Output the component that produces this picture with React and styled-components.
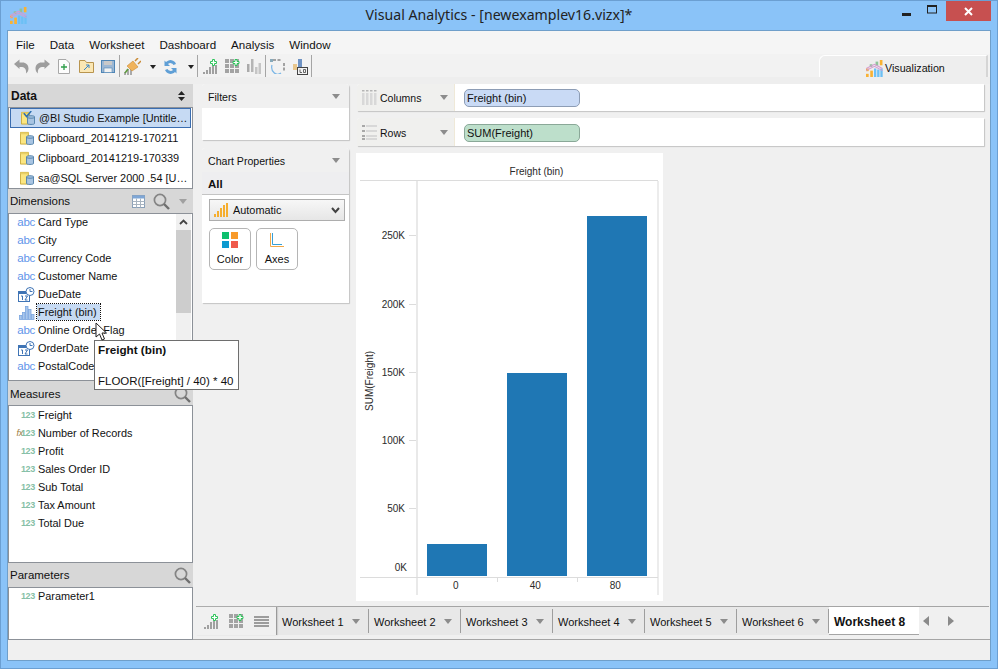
import React from 'react';
import styled, { createGlobalStyle } from 'styled-components';

const FONT = '"Liberation Sans", Arial, sans-serif';

const Global = createGlobalStyle`
  html, body { margin: 0; padding: 0; background: #8ac3f8; }
  body { font-family: ${FONT}; font-size: 11px; color: #111; }
  * { box-sizing: border-box; }
`;

const Frame = styled.div`
  position: relative; width: 998px; height: 669px; overflow: hidden;
  display: flex; flex-direction: column;
  background: #8ac3f8; border: 1px solid #6b9fd2;
`;
const TitleBar = styled.div`
  height: 29px; flex: none; position: relative;
  display: flex; align-items: center; justify-content: center;
  font-size: 14.15px; color: #222; padding-bottom: 2px; font-family: "Noto Sans", sans-serif;
`;
const AppLogo = styled.div`position: absolute; left: 9px; top: 6px; line-height: 0;`;
const WinControls = styled.div`
  position: absolute; right: 6px; top: 0; display: flex; align-items: flex-start;
`;
const WinBtn = styled.div`
  width: ${p => p.$w}px; height: 20px; line-height: 0;
  display: flex; align-items: center; justify-content: center;
  background: ${p => p.$close ? '#c75050' : 'transparent'};
`;
const Client = styled.div`
  flex: 1; margin: 0 6px 7px 6px; min-height: 0;
  display: flex; flex-direction: column;
  background: #f0f0f0; border: 1px solid #6f9fca;
`;
const MenuBar = styled.div`
  height: 23px; flex: none; display: flex; align-items: center; gap: 15px;
  padding: 3px 0 0 8px; background: #f5f5f5; font-size: 11.6px; color: #111;
`;
const ToolBar = styled.div`
  height: 30px; flex: none; display: flex; align-items: center;
  background: #f2f2f2; padding: 0 2px 7px 5px; position: relative;
  box-shadow: inset 0 -7px 0 #eeeeee;
`;
const ToolIcon = styled.span`
  display: inline-flex; line-height: 0; margin-left: ${p => p.$ml || 0}px; margin-top: 2px;
`;
const ToolSep = styled.span`
  width: 1px; height: 22px; background: #a5a5a5; margin: 0 ${p => p.$r ?? 4}px 0 ${p => p.$l ?? 4}px; flex: none;
`;
const VisTab = styled.div`
  margin-left: auto; width: 169px; height: 22px; align-self: flex-end;
  display: flex; align-items: center; gap: 2px; padding: 3px 0 0 46px;
  border: 1px solid #fff; border-bottom: none; border-right: 2px solid #d5d5d5; border-radius: 6px 0 0 0; background: #eeeeee;
  font-size: 10.7px;
`;
const Work = styled.div`flex: 1; min-height: 0; display: flex;`;
const Sidebar = styled.div`width: 185px; flex: none; display: flex; flex-direction: column;`;
const PanelHead = styled.div`
  height: ${p => p.$h}px; flex: none; display: flex; align-items: center;
  background: #d7d7d7; padding: ${p => p.$pt || 0}px ${p => p.$pr ?? 2}px 0 2px;
  font-weight: ${p => p.$bold ? 700 : 400};
`;
const HeadLabel = styled.span`flex: 1; padding-left: ${p => p.$pl || 0}px; font-size: ${p => p.$bold ? '12px' : '11.5px'};`;
const ListBox = styled.div`
  height: ${p => p.$h}px; flex: none; position: relative; overflow: hidden;
  background: #fff; border: 1px solid #8c9198;
  & > :first-child { margin-top: ${p => p.$shift ? -1 : 0}px; }
`;
const DataRow = styled.div`
  height: 20px; display: flex; align-items: center; gap: 4px;
  margin: 0 1px; padding-left: ${p => p.$sel ? 11 : 10}px; white-space: nowrap; overflow: hidden; font-size: 10.9px;
  & > svg { flex: none; }
  ${p => p.$sel ? 'background: #c6daf3; outline: 1px solid #3a6db0; outline-offset: -1px;' : ''}
`;
const FieldRow = styled.div`
  height: 18px; display: flex; align-items: center; white-space: nowrap;
`;
const FieldIcon = styled.span`
  width: 27px; flex: none; display: flex; justify-content: flex-end; padding-right: 1px; line-height: 0;
`;
const AbcTag = styled.span`
  font-size: 11.5px; line-height: 14px; color: #5f95ea; letter-spacing: -0.3px;
`;
const NumTag = styled.span`
  font-size: 9px; line-height: 14px; color: #86bfa6; font-weight: 700; letter-spacing: -0.3px;
`;
const FxMark = styled.em`color: #9a7a40; font-size: 9px; font-weight: 400; margin-right: -2px;`;
const FieldName = styled.span`
  padding: 0 ${p => p.$sel ? 3 : 1}px 0 1px; font-size: 10.9px; line-height: 16px; margin-left: 1px;
  ${p => p.$sel ? 'background: #c6daf3; outline: 1px dotted #111;' : ''}
`;
const Scrollbar = styled.div`
  position: absolute; right: 1px; top: 0; bottom: 0; width: 15px; background: #f0f0f0;
  display: flex; flex-direction: column;
`;
const ScrollUp = styled.div`height: 16px; display: flex; align-items: center; justify-content: center; line-height: 0;`;
const ScrollThumb = styled.div`height: 83px; background: #cdcdcd;`;
const HeadGap = styled.span`width: 8px; flex: none;`;
const MainCol = styled.div`flex: 1; min-width: 0; display: flex; flex-direction: column;`;
const Upper = styled.div`
  flex: 1; min-height: 0; display: flex; padding: 0 6px 0 9px; gap: 8px;
`;
const MidCol = styled.div`width: 147px; flex: none; display: flex; flex-direction: column; gap: 8px;`;
const Card = styled.div`
  height: ${p => p.$h}px; background: #fff; display: flex; flex-direction: column;
  box-shadow: 1px 1px 1px #c4c4c4; border-radius: 3px 3px 0 0; overflow: hidden;
`;
const CardHead = styled.div`
  height: 24px; flex: none; background: #f0f0f0; display: flex; align-items: center;
  justify-content: space-between; padding: 2px 9px 0 6px; font-size: 10.6px;
`;
const Caret = styled.span`
  width: 0; height: 0; border-left: 4px solid transparent; border-right: 4px solid transparent;
  border-top: 5px solid #8c8c8c; flex: none;
`;
const CardCaret = styled(Caret)`margin-top: -2px;`;
const ShelfCaret = styled(Caret)`margin-right: 6px;`;
const HeadCaret = styled(Caret)`margin-left: 9px; border-top-color: #a0a0a0;`;
const AllRow = styled.div`
  height: 23px; flex: none; background: #eeeef0; border-bottom: 1px solid #c4c4c4;
  display: flex; align-items: center; padding: 1px 0 0 6px; font-weight: 700; font-size: 11.5px;
`;
const Select = styled.div`
  height: 22px; flex: none; margin: 4px 4px 0 7px; border: 1px solid #adadad; background: linear-gradient(#f7f7f7, #e6e6e6);
  display: flex; align-items: center; padding: 0 4px 0 4px; gap: 4px; font-size: 10.9px;
`;
const SelectLabel = styled.span`flex: 1;`;
const PropButtons = styled.div`display: flex; gap: 5px; padding: 7px 0 0 7px;`;
const PropButton = styled.div`
  width: 42px; height: 42px; border: 1px solid #b5b5b5; border-radius: 5px; background: #fff;
  display: flex; flex-direction: column; align-items: center; padding-top: 3px; font-size: 11px; gap: 4px; line-height: 14px;
`;
const RightCol = styled.div`flex: 1; min-width: 0; display: flex; flex-direction: column;`;
const ShelfRow = styled.div`
  height: ${p => p.$h}px; flex: none; margin-bottom: 7px; display: flex; background: #fff;
  box-shadow: 1px 1px 1px #c4c4c4; overflow: hidden; border-radius: 3px 0 0 0;
`;
const ShelfLabel = styled.div`
  width: 98px; flex: none; display: flex; align-items: center; background: #f0f0ee;
  border-right: 1px solid #efe9d8; padding: ${p => p.$pt || 0}px 0 0 5px; font-size: 10.5px; gap: 3px;
`;
const ShelfText = styled.span`flex: 1;`;
const Pill = styled.div`
  width: 116px; height: 18px; margin: ${p => p.$mt}px 0 0 9px; border-radius: 5px;
  background: ${p => p.$bg}; border: 1px solid ${p => p.$bd};
  display: flex; align-items: center; padding-left: 2px; font-size: 11px;
`;
const ChartPanel = styled.div`
  width: 307px; height: 448px; margin-left: -1px; background: #fff; line-height: 0;
`;
const TabsBar = styled.div`
  height: 33px; flex: none; margin-left: 3px; margin-right: 1px; border-top: 1px solid #a5a5a5;
  display: flex; align-items: flex-start; position: relative;
`;
const TabTools = styled.div`
  width: 81px; height: 28px; flex: none; display: flex; align-items: center; gap: 10px;
  padding-left: 8px; border-right: 1px solid #9a9a9a; box-shadow: 1px 0 1px #d0d0d0; position: relative; z-index: 1;
`;
const Tab = styled.div`
  width: 92px; height: 28px; flex: none; display: flex; align-items: center; justify-content: space-between;
  background: #e8e8e8; padding: 1px 9px 0 5px; font-size: 11px; position: relative;
  &::after { content: ''; position: absolute; right: 0; top: 2px; bottom: 2px; width: 1px; background: #9e9e9e; }
`;
const ActiveTab = styled.div`
  width: 90px; height: 28px; flex: none; display: flex; align-items: center;
  background: #fff; padding: 2px 0 0 5px; font-size: 12px; font-weight: 700;
  border-bottom: 1px solid #a5a5a5; box-shadow: -1px 0 0 #a5a5a5;
`;
const TabNav = styled.div`display: flex; align-items: center; height: 28px; gap: 19px; padding-left: 4px; background: #f0f0f0;`;
const NavArrow = styled.span`
  width: 0; height: 0; border-top: 5px solid transparent; border-bottom: 5px solid transparent;
  ${p => p.$dir === 'l' ? 'border-right: 6px solid #8a8a8a;' : 'border-left: 6px solid #8a8a8a;'}
`;
const StatusBar = styled.div`height: 21px; flex: none; background: #f0f0f0; border-top: 1px solid #a5a5a5;`;
const Tooltip = styled.div`
  position: absolute; left: 93px; top: 339px; width: 145px; height: 50px; z-index: 5;
  background: #fff; border: 1px solid #6e6e6e; padding: 1px 3px; font-size: 11.5px; line-height: 16px; white-space: nowrap;
`;
const TipTitle = styled.div`font-weight: 700; font-size: 11.7px; height: 31px;`;
const Cursor = styled.div`position: absolute; left: 94px; top: 321px; z-index: 6; line-height: 0;`;

const Logo = ({ s = 16 }) => (
  <svg width={s} height={s} viewBox="0 0 16 16">
    <rect x="0" y="8" width="2.5" height="2.5" fill="#f9b233" /><rect x="0" y="13" width="2.5" height="3" fill="#f9b233" />
    <rect x="3.5" y="4" width="2.5" height="2.5" fill="#8fc49a" />
    <rect x="4" y="10" width="2.5" height="6" fill="#f9b233" />
    <rect x="7.5" y="8" width="2.2" height="8" fill="#6cc0f5" /><rect x="10.5" y="9" width="2.2" height="7" fill="#6cc0f5" />
    <rect x="13.5" y="8" width="2.2" height="8" fill="#6cc0f5" />
    <rect x="9" y="1.5" width="2.5" height="4" fill="#8fc49a" /><rect x="13" y="0" width="2.5" height="5" fill="#f9b233" />
    <path d="M0 8 L8 4 L15.5 8 M0 10 L8 6 L15.5 10" stroke="#d59ad0" strokeWidth="1" fill="none" />
  </svg>
);
const Undo = ({ flip }) => (
  <svg width="16" height="15" viewBox="0 0 16 15" style={flip ? { transform: 'scaleX(-1)' } : undefined}>
    <path d="M1 5 L6.5 0.5 V3.5 H9.5 C13 3.5 15.5 6 15.5 9.5 C15.5 11.5 14.5 13.5 13 14.5 C13.5 12 12.5 8 9 8 H6.5 V10 Z" fill="#9d9d9d" />
  </svg>
);
const NewDoc = () => (
  <svg width="12" height="15" viewBox="0 0 12 15">
    <path d="M0.5 0.5 H8 L11.5 4 V14.5 H0.5 Z" fill="#fdfdfd" stroke="#a8a8a8" />
    <path d="M6 5 V11 M3 8 H9" stroke="#2f9e4a" strokeWidth="1.3" />
  </svg>
);
const OpenFolder = () => (
  <svg width="15" height="13" viewBox="0 0 15 13">
    <path d="M0.5 0.5 H6 L7.5 2.5 H14.5 V12.5 H0.5 Z" fill="#fbe7b4" stroke="#b8944e" />
    <path d="M5 10 L10 5 M7 5 H10 V8" stroke="#3a86c8" strokeWidth="1" fill="none" />
  </svg>
);
const Save = () => (
  <svg width="14" height="13" viewBox="0 0 14 13">
    <rect x="0.5" y="0.5" width="13" height="12" fill="#9db8d4" stroke="#4f86b6" />
    <rect x="3" y="1" width="8" height="4" fill="#c9c9c9" />
    <rect x="3" y="8" width="8" height="4.5" fill="#f2f2f2" stroke="#4f86b6" strokeWidth="0.6" />
  </svg>
);
const Plug = () => (
  <svg width="17" height="18" viewBox="0 0 17 18">
    <rect x="0" y="14" width="2" height="3" fill="#aaa" /><rect x="3" y="11" width="2" height="6" fill="#aaa" /><rect x="6" y="8" width="2" height="9" fill="#aaa" />
    <path d="M3 8 L9 3 L14 9 L8 13 Z" fill="#f0b35c" stroke="#c98a35" strokeWidth="0.6" />
    <path d="M11 3 L14 0 M14 6 L17 3" stroke="#c98a35" strokeWidth="1.5" />
    <path d="M4 11 L1 15" stroke="#5e9b3d" strokeWidth="1.6" />
  </svg>
);
const Sync = () => (
  <svg width="15" height="16" viewBox="0 0 15 16">
    <path d="M13 5 A6 6 0 0 0 3 3 L1.5 1.5 V7 H7 L5 5 A3.5 3.5 0 0 1 10.5 6 Z" fill="#5f9fd6" />
    <path d="M2 11 A6 6 0 0 0 12 13 L13.5 14.5 V9 H8 L10 11 A3.5 3.5 0 0 1 4.5 10 Z" fill="#5f9fd6" />
  </svg>
);
const SmallCaret = () => (
  <svg width="6" height="4" viewBox="0 0 6 4"><path d="M0 0 H6 L3 4 Z" fill="#222" /></svg>
);
const Plus = ({ x, y }) => (
  <path transform={`translate(${x} ${y})`} d="M2 0 H4 V2 H6 V4 H4 V6 H2 V4 H0 V2 H2 Z" fill="#fff" stroke="#2dc45a" strokeWidth="1" />
);
const AddChart = () => (
  <svg width="15" height="15" viewBox="0 0 15 15">
    {[[0, 13], [3, 11], [6, 8], [9, 6], [12, 6]].map(([x, y]) => <rect key={x} x={x} y={y} width="2" height={15 - y} fill="#a0a0a0" />)}
    <Plus x="7.5" y="0.5" />
  </svg>
);
const AddDash = () => (
  <svg width="15" height="15" viewBox="0 0 15 15">
    {[0, 5, 10].flatMap(x => [0, 5, 10].map(y => <rect key={`${x}${y}`} x={x} y={y} width="4" height="4" fill="#a3a3a3" />))}
    <Plus x="8" y="0.5" />
  </svg>
);
const GreyChart = () => (
  <svg width="14" height="15" viewBox="0 0 14 15">
    <rect x="0" y="5" width="2.5" height="8" fill="#aaa" /><rect x="4" y="0" width="2.5" height="13" fill="#b5b5b5" />
    <rect x="8" y="8" width="2.5" height="7" fill="#c5c5c5" /><rect x="11.5" y="4" width="2.5" height="11" fill="#c5c5c5" />
  </svg>
);
const Lasso = () => (
  <svg width="15" height="15" viewBox="0 0 15 15">
    <path d="M2 6 A6 7 0 0 0 11 14" fill="none" stroke="#7ab6e6" strokeWidth="1.2" />
    <path d="M3 1 H12 M14 4 V12" stroke="#888" strokeWidth="1.5" strokeDasharray="3 1.5" />
    <rect x="0" y="0" width="3" height="3" fill="#8ab" />
  </svg>
);
const FieldBox = () => (
  <svg width="15" height="16" viewBox="0 0 15 16">
    <rect x="0" y="5" width="4" height="6" fill="#e8c68c" />
    <rect x="5" y="0" width="4" height="8" fill="#6f93c4" />
    <rect x="4.5" y="8.5" width="10" height="7" fill="#f4f4f4" stroke="#444" />
    <path d="M7 10.5 V13.5 H9 M10.5 10.5 H12.5 V13.5 H10.5 Z" stroke="#444" strokeWidth="0.8" fill="none" />
  </svg>
);
const DbIcon = ({ check }) => (
  <svg width="14" height="14" viewBox="0 0 15 15">
    <path d="M0.5 1.5 H9 V14 H0.5 Z" fill="#fbe680" stroke="#c9a93a" />
    <rect x="0.5" y="1.5" width="8.5" height="2" fill="#e8cf66" />
    <path d="M7 6 C7 4.8 14.5 4.8 14.5 6 V13.5 C14.5 14.7 7 14.7 7 13.5 Z" fill="#a8c4e2" stroke="#4f7fa8" />
    <path d="M7 7 C8 8 13.5 8 14.5 7" stroke="#4f7fa8" fill="none" />
    {check && <path d="M3 2.5 L6 6 L11 0" stroke="#2d6fb0" strokeWidth="1.6" fill="none" />}
  </svg>
);
const TableIcon = () => (
  <svg width="13" height="13" viewBox="0 0 13 13">
    <rect x="0.5" y="0.5" width="12" height="12" fill="#fff" stroke="#8aa0b8" />
    <rect x="0.5" y="0.5" width="12" height="3" fill="#7ea6d6" />
    <path d="M0.5 6.5 H12.5 M0.5 9.5 H12.5 M4.5 3.5 V12.5 M8.5 3.5 V12.5" stroke="#a8b4c0" strokeWidth="1" />
  </svg>
);
const Search = () => (
  <svg width="17" height="17" viewBox="0 0 17 17" style={{ flex: 'none' }}>
    <circle cx="7" cy="7" r="5.6" fill="none" stroke="#848484" strokeWidth="1.7" />
    <path d="M11 11 L16 16" stroke="#6f6f6f" strokeWidth="2.4" />
  </svg>
);
const SortArrows = () => (
  <svg width="7" height="10" viewBox="0 0 7 10" style={{ marginRight: 6 }}>
    <path d="M3.5 0 L7 4 H0 Z M3.5 10 L0 6 H7 Z" fill="#222" />
  </svg>
);
const DateIcon = () => (
  <svg width="17" height="15" viewBox="0 0 17 15">
    <rect x="0.5" y="4.5" width="11" height="10" fill="#fff" stroke="#3f74b5" />
    <rect x="0" y="4" width="12" height="3" fill="#3f74b5" />
    <path d="M3 9 H4.5 V13 M7 9 H9.5 L7 13 H9.5" stroke="#3f74b5" strokeWidth="1" fill="none" />
    <circle cx="12" cy="4.5" r="4" fill="#fff" stroke="#3f74b5" />
    <path d="M12 2 V4.5 H14.5" stroke="#3f74b5" fill="none" />
  </svg>
);
const BinIcon = () => (
  <svg width="16" height="15" viewBox="0 0 16 15">
    {[[0, 10], [3, 7], [6, 1], [9, 4], [12, 9]].map(([x, y]) => <rect key={x} x={x + 0.5} y={y + 0.5} width="2.5" height={14 - y} fill="#a9c7ec" stroke="#7ba6e0" strokeWidth="0.8" />)}
  </svg>
);
const FxNum = () => <NumTag><FxMark>fx</FxMark>123</NumTag>;
const ColumnsIcon = () => (
  <svg width="15" height="15" viewBox="0 0 15 15">
    {[0, 4, 8, 12].map(x => <g key={x}><rect x={x} y="0" width="2.5" height="1.5" fill="#b5b5b5" /><rect x={x} y="3" width="2.5" height="12" fill="#d8d8d8" /></g>)}
  </svg>
);
const RowsIcon = () => (
  <svg width="15" height="15" viewBox="0 0 15 15">
    {[0, 5, 10].map(y => <g key={y}><rect x="0" y={y} width="3" height="2" fill="#a8a8a8" /><rect x="4" y={y} width="11" height="2" fill="#d8d8d8" /></g>)}
    <rect y="13" width="3" height="2" fill="#a8a8a8" /><rect x="4" y="13" width="11" height="2" fill="#d8d8d8" />
  </svg>
);
const AutoBars = () => (
  <svg width="15" height="14" viewBox="0 0 15 14">
    {[[0, 11], [3, 8], [6, 5], [9, 2], [12, 0]].map(([x, y]) => <rect key={x} x={x} y={y} width="2" height={14 - y} fill="#f5ae2f" />)}
  </svg>
);
const ChevronDown = () => (
  <svg width="9" height="7" viewBox="0 0 9 7"><path d="M1 1 L4.5 5 L8 1" stroke="#444" strokeWidth="2" fill="none" /></svg>
);
const ColorGrid = () => (
  <svg width="16" height="16" viewBox="0 0 16 16">
    <rect width="7" height="7" fill="#0dbf6d" /><rect x="9" width="7" height="7" fill="#f89a2a" />
    <rect y="9" width="7" height="7" fill="#0d9ad0" /><rect x="9" y="9" width="7" height="7" fill="#ef5a4c" />
  </svg>
);
const AxesIcon = () => (
  <svg width="14" height="16" viewBox="0 -1 14 16">
    <path d="M0.5 0 V13.5 H14" stroke="#f0a84a" fill="none" />
    <path d="M2.5 0 V11.5 H12" stroke="#35a0d8" fill="none" />
  </svg>
);
const Lines = () => (
  <svg width="15" height="11" viewBox="0 0 15 11">
    {[0, 3, 6, 9].map(y => <rect key={y} y={y} width="15" height="2" fill="#9c9c9c" />)}
  </svg>
);
const ScrollChevron = () => (
  <svg width="9" height="6" viewBox="0 0 9 6"><path d="M1 5 L4.5 1.5 L8 5" stroke="#444" strokeWidth="1.8" fill="none" /></svg>
);

const SVGText = styled.text`
  font-family: ${FONT}; font-size: 10px; fill: #2a2a2a;
`;
const bars = [[71, 391, 32], [151, 220, 203], [231, 63, 360]];
const yTicks = [['250K', 82], ['200K', 151], ['150K', 219], ['100K', 287], ['50K', 355]];

const Chart = () => (
  <svg width="307" height="448" viewBox="0 0 307 448">
    <SVGText x="180.5" y="22" textAnchor="middle">Freight (bin)</SVGText>
    <rect x="4" y="27" width="298" height="1" fill="#dcdcdc" />
    <rect x="60" y="28" width="2" height="414" fill="#e9e9e9" />
    <rect x="301" y="28" width="2" height="414" fill="#ececec" />
    <rect x="4" y="424" width="298" height="1" fill="#dcdcdc" />
    <rect x="141" y="425" width="1" height="4" fill="#dcdcdc" />
    <rect x="221" y="425" width="1" height="4" fill="#dcdcdc" />
    {bars.map(([x, y, h]) => <rect key={x} x={x} y={y} width="60" height={h} fill="#1f77b4" />)}
    {yTicks.map(([l, ty]) => (
      <g key={l}>
        <SVGText x="49" y={ty + 4} textAnchor="end">{l}</SVGText>
        <rect x="53" y={ty} width="7" height="1" fill="#dcdcdc" />
      </g>
    ))}
    <SVGText x="51" y="418" textAnchor="end">0K</SVGText>
    <SVGText x="99.7" y="436" textAnchor="middle">0</SVGText>
    <SVGText x="179.3" y="436" textAnchor="middle">40</SVGText>
    <SVGText x="259.3" y="436" textAnchor="middle">80</SVGText>
    <SVGText transform="translate(17 228) rotate(-90)" textAnchor="middle">SUM(Freight)</SVGText>
  </svg>
);

const dims = [
  ['abc', 'Card Type'], ['abc', 'City'], ['abc', 'Currency Code'], ['abc', 'Customer Name'], ['date', 'DueDate'],
  ['bin', 'Freight (bin)'], ['abc', 'Online Order Flag'], ['date', 'OrderDate'], ['abc', 'PostalCode'], ['abc', 'Product Category'],
];
const measures = [
  ['num', 'Freight'], ['fx', 'Number of Records'], ['num', 'Profit'], ['num', 'Sales Order ID'],
  ['num', 'Sub Total'], ['num', 'Tax Amount'], ['num', 'Total Due'],
];
const FieldKind = ({ k }) => {
  if (k === 'abc') return <AbcTag>abc</AbcTag>;
  if (k === 'num') return <NumTag>123</NumTag>;
  if (k === 'fx') return <FxNum />;
  if (k === 'date') return <DateIcon />;
  return <BinIcon />;
};
const Field = ({ k, name, sel }) => (
  <FieldRow>
    <FieldIcon><FieldKind k={k} /></FieldIcon>
    <FieldName $sel={sel}>{name}</FieldName>
  </FieldRow>
);
const sheets = ['Worksheet 1', 'Worksheet 2', 'Worksheet 3', 'Worksheet 4', 'Worksheet 5', 'Worksheet 6'];

export default function App() {
  return (
    <Frame>
      <Global />
      <TitleBar>
        <AppLogo><Logo s={17} /></AppLogo>
        Visual Analytics - [newexamplev16.vizx]*
        <WinControls>
          <WinBtn $w={25}>
            <svg width="9" height="3" viewBox="0 0 9 3" style={{ marginTop: 7 }}><rect width="9" height="3" fill="#222" /></svg>
          </WinBtn>
          <WinBtn $w={27}>
            <svg width="11" height="9" viewBox="0 0 11 9" style={{ marginTop: -4 }}><rect x="0.5" y="0.5" width="9" height="7.5" fill="none" stroke="#222" /><rect width="10" height="2" fill="#222" /></svg>
          </WinBtn>
          <WinBtn $w={45} $close>
            <svg width="9" height="9" viewBox="0 0 9 9"><path d="M1 1 L8 8 M8 1 L1 8" stroke="#fff" strokeWidth="2" /></svg>
          </WinBtn>
        </WinControls>
      </TitleBar>
      <Client>
        <MenuBar>
          {['File', 'Data', 'Worksheet', 'Dashboard', 'Analysis', 'Window'].map(m => <span key={m}>{m}</span>)}
        </MenuBar>
        <ToolBar>
          <ToolIcon $ml={0}><Undo /></ToolIcon>
          <ToolIcon $ml={6}><Undo flip /></ToolIcon>
          <ToolIcon $ml={7}><NewDoc /></ToolIcon>
          <ToolIcon $ml={9}><OpenFolder /></ToolIcon>
          <ToolIcon $ml={7}><Save /></ToolIcon>
          <ToolSep />
          <ToolIcon><Plug /></ToolIcon>
          <ToolIcon $ml={9}><SmallCaret /></ToolIcon>
          <ToolIcon $ml={7}><Sync /></ToolIcon>
          <ToolIcon $ml={10}><SmallCaret /></ToolIcon>
          <ToolSep $l={3} />
          <ToolIcon $ml={1}><AddChart /></ToolIcon>
          <ToolIcon $ml={7}><AddDash /></ToolIcon>
          <ToolIcon $ml={7}><GreyChart /></ToolIcon>
          <ToolSep />
          <ToolIcon><Lasso /></ToolIcon>
          <ToolIcon $ml={8}><FieldBox /></ToolIcon>
          <ToolSep $l={3} />
          <VisTab><Logo s={17} />Visualization</VisTab>
        </ToolBar>
        <Work>
          <Sidebar>
            <PanelHead $h={23} $bold>
              <HeadLabel $pl={1} $bold>Data</HeadLabel>
              <SortArrows />
            </PanelHead>
            <ListBox $h={82}>
              <DataRow $sel><DbIcon check />@BI Studio Example [Untitle…</DataRow>
              <DataRow><DbIcon />Clipboard_20141219-170211</DataRow>
              <DataRow><DbIcon />Clipboard_20141219-170339</DataRow>
              <DataRow><DbIcon />sa@SQL Server 2000 .54 [U…</DataRow>
            </ListBox>
            <PanelHead $h={24} $pr={6}>
              <HeadLabel>Dimensions</HeadLabel>
              <TableIcon />
              <HeadGap />
              <Search />
              <HeadCaret />
            </PanelHead>
            <ListBox $h={168} $shift>
              {dims.map(([k, n]) => <Field key={n} k={k} name={n} sel={n === 'Freight (bin)'} />)}
              <Scrollbar>
                <ScrollUp><ScrollChevron /></ScrollUp>
                <ScrollThumb />
              </Scrollbar>
            </ListBox>
            <PanelHead $h={24} $pt={2}>
              <HeadLabel>Measures</HeadLabel>
              <Search />
            </PanelHead>
            <ListBox $h={158}>
              {measures.map(([k, n]) => <Field key={n} k={k} name={n} />)}
            </ListBox>
            <PanelHead $h={24}>
              <HeadLabel>Parameters</HeadLabel>
              <Search />
            </PanelHead>
            <ListBox $h={53} $shift>
              <Field k="num" name="Parameter1" />
            </ListBox>
          </Sidebar>
          <MainCol>
            <Upper>
              <MidCol>
                <Card $h={56}>
                  <CardHead>Filters<CardCaret /></CardHead>
                </Card>
                <Card $h={155}>
                  <CardHead>Chart Properties<CardCaret /></CardHead>
                  <AllRow>All</AllRow>
                  <Select>
                    <AutoBars />
                    <SelectLabel>Automatic</SelectLabel>
                    <ChevronDown />
                  </Select>
                  <PropButtons>
                    <PropButton><ColorGrid />Color</PropButton>
                    <PropButton><AxesIcon />Axes</PropButton>
                  </PropButtons>
                </Card>
              </MidCol>
              <RightCol>
                <ShelfRow $h={27}>
                  <ShelfLabel><ColumnsIcon /><ShelfText>Columns</ShelfText><ShelfCaret /></ShelfLabel>
                  <Pill $mt={5} $bg="#c9daf5" $bd="#8d9db5">Freight (bin)</Pill>
                </ShelfRow>
                <ShelfRow $h={28}>
                  <ShelfLabel $pt={1}><RowsIcon /><ShelfText>Rows</ShelfText><ShelfCaret /></ShelfLabel>
                  <Pill $mt={6} $bg="#bddfcb" $bd="#8aa898">SUM(Freight)</Pill>
                </ShelfRow>
                <ChartPanel><Chart /></ChartPanel>
              </RightCol>
            </Upper>
            <TabsBar>
              <TabTools><AddChart /><AddDash /><Lines /></TabTools>
              {sheets.map(s => <Tab key={s}>{s}<Caret /></Tab>)}
              <ActiveTab>Worksheet 8</ActiveTab>
              <TabNav><NavArrow $dir="l" /><NavArrow $dir="r" /></TabNav>
            </TabsBar>
          </MainCol>
        </Work>
        <StatusBar />
      </Client>
      <Tooltip>
        <TipTitle>Freight (bin)</TipTitle>
        FLOOR([Freight] / 40) * 40
      </Tooltip>
      <Cursor>
        <svg width="13" height="19" viewBox="0 0 13 19">
          <path d="M1 1 V15 L4.5 12 L7 18 L9.5 17 L7 11 H11.5 Z" fill="#fff" stroke="#222" strokeWidth="1" />
        </svg>
      </Cursor>
    </Frame>
  );
}
